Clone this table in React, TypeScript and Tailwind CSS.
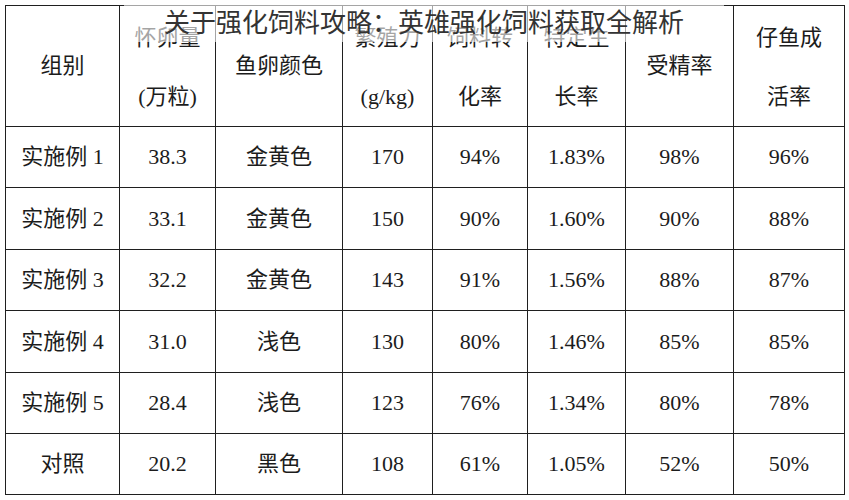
import React from "react";

type Row = string[];

const HEADERS: string[][] = [
  ["组别"],
  ["怀卵量", "(万粒)"],
  ["鱼卵颜色"],
  ["繁殖力", "(g/kg)"],
  ["饲料转", "化率"],
  ["特定生", "长率"],
  ["受精率"],
  ["仔鱼成", "活率"],
];

const ROWS: Row[] = [
  ["实施例 1", "38.3", "金黄色", "170", "94%", "1.83%", "98%", "96%"],
  ["实施例 2", "33.1", "金黄色", "150", "90%", "1.60%", "90%", "88%"],
  ["实施例 3", "32.2", "金黄色", "143", "91%", "1.56%", "88%", "87%"],
  ["实施例 4", "31.0", "浅色", "130", "80%", "1.46%", "85%", "85%"],
  ["实施例 5", "28.4", "浅色", "123", "76%", "1.34%", "80%", "78%"],
  ["对照", "20.2", "黑色", "108", "61%", "1.05%", "52%", "50%"],
];

// row heights add up to the 368px body of the scan
const ROW_H = ["h-[61px]", "h-[62px]", "h-[61px]", "h-[62px]", "h-[61px]", "h-[61px]"];

export default function App() {
  return (
    <div className="relative w-[849px] h-[500px] bg-white pl-[5px] pt-[5px] overflow-hidden font-['Liberation_Serif','Noto_Sans_CJK_SC',serif] text-[#1c1c1c]">
      <table className="table-fixed border-collapse w-[839px] text-[22px] leading-none">
        <colgroup>
          <col className="w-[114px]" />
          <col className="w-[96px]" />
          <col className="w-[127px]" />
          <col className="w-[90px]" />
          <col className="w-[95px]" />
          <col className="w-[98px]" />
          <col className="w-[108px]" />
          <col className="w-[111px]" />
        </colgroup>
        <thead>
          <tr className="h-[121px]">
            {HEADERS.map((lines, i) => (
              <th key={i} className="border border-[#1f1f1f] font-normal p-0 align-middle">
                {lines.length === 2 ? (
                  <div className="flex flex-col items-center pt-[2px]">
                    <div className="h-[59px] flex items-center">{lines[0]}</div>
                    <div className="h-[59px] flex items-center">{lines[1]}</div>
                  </div>
                ) : (
                  <div className="flex justify-center">{lines[0]}</div>
                )}
              </th>
            ))}
          </tr>
        </thead>
        <tbody>
          {ROWS.map((row, r) => (
            <tr key={r} className={ROW_H[r]}>
              {row.map((cell, c) => (
                <td key={c} className="border border-[#1f1f1f] text-center p-0 align-middle">
                  {cell}
                </td>
              ))}
            </tr>
          ))}
        </tbody>
      </table>

      {/* title banner laid over the top of the scan */}
      <div className="absolute top-0 left-[124px] w-[600px] h-[42px] bg-white/60 flex items-center justify-center">
        <span className="font-['Noto_Sans_CJK_SC',sans-serif] text-[26px] leading-none text-[#333]">
          关于强化饲料攻略：英雄强化饲料获取全解析
        </span>
      </div>
    </div>
  );
}
